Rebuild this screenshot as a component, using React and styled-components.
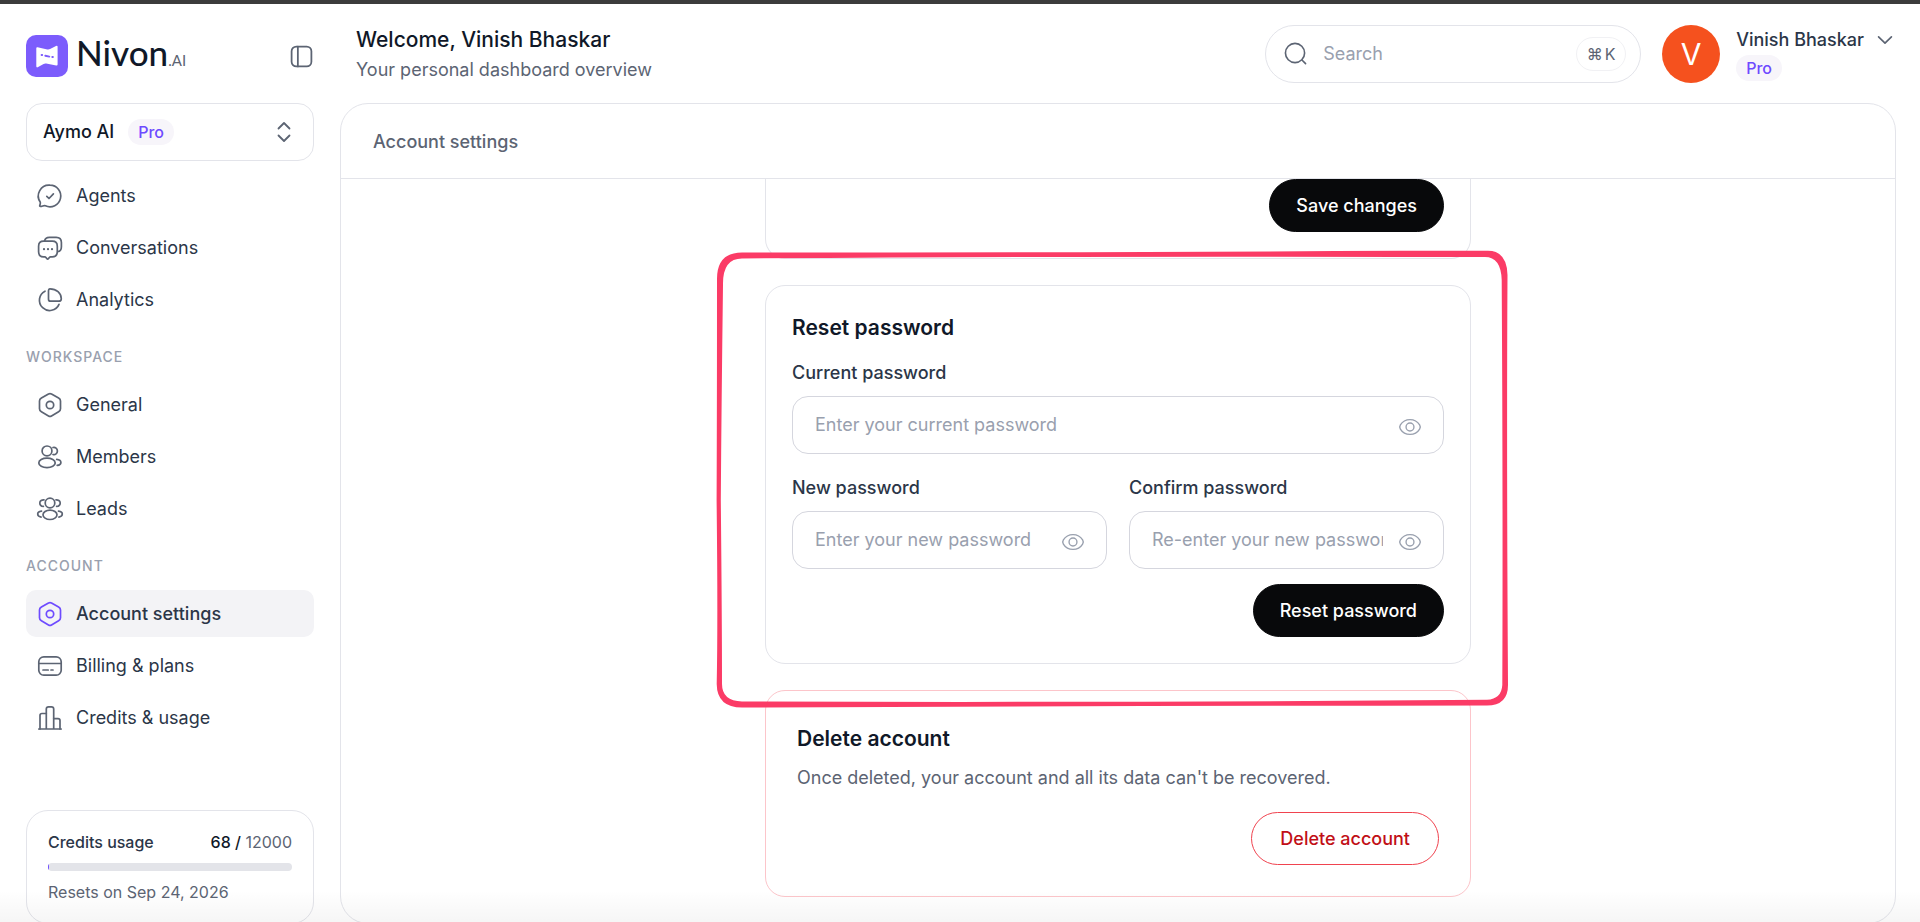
import { useState } from "react";
import styled, { createGlobalStyle, css } from "styled-components";

const GlobalStyle = createGlobalStyle`
  * {
    box-sizing: border-box;
  }

  body {
    margin: 0;
    overflow: hidden;
    background: #fff;
    color: #2b3648;
    font-family: Inter, "Liberation Sans", sans-serif;
    font-size: 18px;
    line-height: 26px;
    -webkit-font-smoothing: antialiased;
  }

  button,
  input {
    font: inherit;
    color: inherit;
  }

  h1,
  h2,
  p {
    margin: 0;
  }
`;

const icons = {
  sidebar: (
    <>
      <rect x="2.5" y="2.5" width="19" height="19" rx="4.5" />
      <path d="M8.5 2.5v19" />
    </>
  ),
  agents: (
    <>
      <path d="M12 1.2a10.8 10.8 0 1 1-4.6 20.6c-1.2-.5-2.1 0-3.3.4-1.2.3-2.6.3-2.4-.5.3-1 .9-2.1.6-3.5A10.8 10.8 0 0 1 12 1.2z" />
      <path d="M8.8 12.3l2.2 2.2 4.4-4.6" />
    </>
  ),
  conversations: (
    <>
      <path d="M6.6 5.2c.3-2.6 1.7-3.9 4.8-3.9h6.8c3.6 0 5.2 1.6 5.2 5.2v4.2c0 3-1.1 4.6-3.7 5" />
      <path d="M5.6 5.2h8.7c3.3 0 5 1.7 5 5v5.6c0 3.3-1.7 5-5 5h-1.8c-.5 0-.8.2-1.1.6l-.9 1.2c-.5.7-1.2.7-1.7 0l-.9-1.2c-.3-.4-.6-.6-1.1-.6H5.6c-3.3 0-5-1.7-5-5v-5.6c0-3.3 1.7-5 5-5z" />
      <path d="M6 13.2h.02M10 13.2h.02M14 13.2h.02" strokeWidth="2.2" />
    </>
  ),
  analytics: (
    <>
      <path d="M12 .9c6.3 0 11.3 4.2 11.3 9.8 0 1.9-.8 2.5-2.5 2.5h-8.300c-1.300 0-2-.7-2-2V3.100c0-1.500.4-2.200 1.500-2.200z" />
      <path d="M7 3.2A10.2 10.2 0 1 0 21 16.3" />
    </>
  ),
  settings: (
    <>
      <path d="M10.5 1.1c.9-.5 2.1-.5 3 0l7.1 4c1.2.7 1.9 1.5 1.9 3v7.6c0 1.5-.7 2.4-1.9 3.1l-7.1 4.1c-.9.5-2.1.5-3 0l-7.1-4.1c-1.2-.7-1.9-1.6-1.9-3.1V8.1c0-1.5.7-2.3 1.9-3z" />
      <circle cx="12" cy="12" r="3.7" />
    </>
  ),
  members: (
    <>
      <circle cx="9" cy="5.9" r="4.9" />
      <ellipse cx="9" cy="17.9" rx="8.2" ry="4.7" />
      <path d="M15 2.5c2.3-.6 4.4 1 4.4 3.5s-2.1 4.2-4.4 3.5" />
      <path d="M18.7 14.4c2.4.3 4.2 1.5 4.2 3s-1.5 2.7-3.7 3" />
    </>
  ),
  leads: (
    <>
      <circle cx="12" cy="6" r="4.8" />
      <ellipse cx="12" cy="17.8" rx="7" ry="4.7" />
      <path d="M18 2.8c2-.2 4.2 1 4.2 3.1s-1.4 3.3-3.6 3.5" />
      <path d="M6 2.8c-2-.2-4.2 1-4.2 3.1s1.4 3.3 3.6 3.5" />
      <path d="M20.5 14.2c2.2.2 3.8 1.3 3.8 2.9s-1.4 2.7-3.4 3" />
      <path d="M3.5 14.2c-2.2.2-3.8 1.3-3.8 2.9s1.4 2.7 3.4 3" />
    </>
  ),
  billing: (
    <>
      <rect x=".8" y="2.8" width="22.4" height="18.4" rx="5" />
      <path d="M.8 9.5h22.4M5 16h5.2M13 16h2" />
    </>
  ),
  credits: (
    <>
      <path d="M.8 23h22.4M8.3 23V3c0-1.4.9-2.2 2.3-2.2h2.8c1.4 0 2.3.8 2.3 2.2v20" />
      <path d="M2 23V9.5c0-1.3.7-2 2-2h4.3M15.7 12.6H20c1.3 0 2 .7 2 2V23" />
    </>
  ),
  sort: <path d="M6.5 8.5L12 3l5.5 5.5M6.5 15.5L12 21l5.5-5.5" />,
  chevron: <path d="M5 8.5l7 7 7-7" />,
  search: (
    <>
      <circle cx="11.5" cy="11.5" r="10" />
      <path d="M19 19l3.5 3.5" />
    </>
  ),
  eye: (
    <>
      <path d="M12 4c5 0 8.6 2.7 10.5 5.8.9 1.4.9 3 0 4.4C20.6 17.3 17 20 12 20s-8.6-2.7-10.5-5.8c-.9-1.4-.9-3 0-4.4C3.4 6.7 7 4 12 4z" />
      <circle cx="12" cy="12" r="4.3" />
    </>
  ),
};

const Icon = ({ name, size = 24, stroke = 1.7 }) => (
  <Svg
    width={size}
    height={size}
    viewBox="0 0 24 24"
    fill="none"
    stroke="currentColor"
    strokeWidth={stroke}
    strokeLinecap="round"
    strokeLinejoin="round"
    aria-hidden="true"
  >
    {icons[name]}
  </Svg>
);

const mainLinks = [
  { icon: "agents", label: "Agents" },
  { icon: "conversations", label: "Conversations" },
  { icon: "analytics", label: "Analytics" },
];

const workspaceLinks = [
  { icon: "settings", label: "General" },
  { icon: "members", label: "Members" },
  { icon: "leads", label: "Leads" },
];

const accountLinks = [
  { icon: "settings", label: "Account settings", active: true },
  { icon: "billing", label: "Billing & plans" },
  { icon: "credits", label: "Credits & usage" },
];

const NavList = ({ links }) => (
  <List>
    {links.map((link) => (
      <li key={link.label}>
        <NavLink href="#" $active={link.active}>
          <Icon name={link.icon} />
          {link.label}
        </NavLink>
      </li>
    ))}
  </List>
);

const PasswordField = ({ id, label, placeholder }) => {
  const [visible, setVisible] = useState(false);

  return (
    <Field>
      <Label htmlFor={id}>{label}</Label>
      <InputBox>
        <Input id={id} type={visible ? "text" : "password"} placeholder={placeholder} />
        <IconButton type="button" aria-label="Show password" onClick={() => setVisible(!visible)}>
          <Icon name="eye" size={22} stroke={1.5} />
        </IconButton>
      </InputBox>
    </Field>
  );
};

const Logo = () => (
  <Brand href="#">
    <svg width="42" height="42" viewBox="0 0 42 42" aria-hidden="true">
      <rect width="42" height="42" rx="10" fill="#7c5cfc" />
      <path
        d="M10.3 13.3q0-1.3 1.3-1l9.7 2.2q1.5.3 2.7-.4l6-3.1q1.6-.7 1.6.8v17.6q0 1.4-1.4 1.1l-10-2q-1.4-.3-2.6.4l-5.5 3.2q-1.8.9-1.8-.8z"
        fill="#fff"
      />
      <path d="M15.6 20h.6M19.3 20.7l4 .9M26.3 22h.6" stroke="#7c5cfc" strokeWidth="1.9" strokeLinecap="round" />
    </svg>
    <BrandName>
      Nivon<BrandSuffix>.AI</BrandSuffix>
    </BrandName>
  </Brand>
);

const App = () => {
  const used = 68;
  const total = 12000;

  return (
    <Page>
      <GlobalStyle />
      <Sidebar>
        <BrandRow>
          <Logo />
          <IconButton type="button" aria-label="Collapse sidebar">
            <Icon name="sidebar" size={25} />
          </IconButton>
        </BrandRow>
        <Workspace type="button">
          Aymo AI
          <Badge>Pro</Badge>
          <Icon name="sort" size={24} stroke={1.8} />
        </Workspace>
        <nav>
          <NavList links={mainLinks} />
          <NavTitle>WORKSPACE</NavTitle>
          <NavList links={workspaceLinks} />
          <NavTitle>ACCOUNT</NavTitle>
          <NavList links={accountLinks} />
        </nav>
        <Usage>
          <UsageRow>
            <UsageLabel>Credits usage</UsageLabel>
            <span>
              <UsageCount>{used} /</UsageCount> {total}
            </span>
          </UsageRow>
          <Track>
            <TrackFill style={{ width: `${(used / total) * 100}%` }} />
          </Track>
          <p>Resets on Sep 24, 2026</p>
        </Usage>
      </Sidebar>

      <Main>
        <TopBar>
          <Greeting>
            <Welcome>Welcome, Vinish Bhaskar</Welcome>
            <Muted>Your personal dashboard overview</Muted>
          </Greeting>
          <SearchBox>
            <Icon name="search" size={23} stroke={1.7} />
            <SearchInput type="search" aria-label="Search" placeholder="Search" />
            <Shortcut>
              <span>⌘</span>
              <span>K</span>
            </Shortcut>
          </SearchBox>
          <Profile type="button">
            <Avatar>V</Avatar>
            <ProfileText>
              <ProfileName>
                Vinish Bhaskar
                <Icon name="chevron" size={22} stroke={1.8} />
              </ProfileName>
              <Badge>Pro</Badge>
            </ProfileText>
          </Profile>
        </TopBar>

        <Panel>
          <PanelHeader>Account settings</PanelHeader>
          <Cards>
            <Card $cut>
              <Actions>
                <Button type="button">Save changes</Button>
              </Actions>
            </Card>

            <Highlighted>
              <Card as="form">
                <CardTitle>Reset password</CardTitle>
                <Fields>
                  <PasswordField id="current" label="Current password" placeholder="Enter your current password" />
                  <FieldRow>
                    <PasswordField id="new" label="New password" placeholder="Enter your new password" />
                    <PasswordField id="confirm" label="Confirm password" placeholder="Re-enter your new password" />
                  </FieldRow>
                </Fields>
                <Actions>
                  <Button type="button">Reset password</Button>
                </Actions>
              </Card>
              <Marker viewBox="716 250 793 458" preserveAspectRatio="none" aria-hidden="true">
                <path
                  fillRule="evenodd"
                  fill="#fb3b66"
                  d="M717 280Q716.5 252.5 742 252.5Q1100 252.5 1400 250.800H1488Q1507 251 1507.5 275Q1506.5 450 1508 685Q1508 705.5 1487 705.5Q1100 706 742 707.5Q717 707.5 716.7 684Q718 620 716.6 500Q717 400 717 280Z
                  M723 285Q722.500 258.500 742 258.500Q1100 256 1400 257H1485Q1501 257 1501.700 280Q1503 500 1502.300 685Q1501.500 699 1487 699.800Q1100 702.800 742 701.500Q722 701 722 684Q722 620 720.800 500Q721.500 400 723 285Z"
                />
              </Marker>
            </Highlighted>

            <Card $danger>
              <CardTitle>Delete account</CardTitle>
              <Warning>Once deleted, your account and all its data can't be recovered.</Warning>
              <Actions>
                <Button type="button" $danger>
                  Delete account
                </Button>
              </Actions>
            </Card>
          </Cards>
        </Panel>
      </Main>
      <BottomShade />
    </Page>
  );
};

const Svg = styled.svg`
  display: block;
  flex: none;
  overflow: visible;
`;

const Page = styled.div`
  position: relative;
  display: flex;
  height: calc(100vh + 2px);
  overflow: hidden;
  border-top: 4px solid #3c3c3c;
`;

const Sidebar = styled.aside`
  display: flex;
  flex-direction: column;
  flex: none;
  width: 340px;
  padding: 31px 26px 0;
`;

const BrandRow = styled.div`
  display: flex;
  align-items: center;
  justify-content: space-between;
  height: 42px;
  margin-bottom: 26px;
`;

const Brand = styled.a`
  display: flex;
  align-items: center;
  gap: 8px;
  color: #101828;
  text-decoration: none;
`;

const BrandName = styled.span`
  font-family: Lato, sans-serif;
  font-size: 35px;
  font-weight: 500;
  line-height: 42px;
`;

const BrandSuffix = styled.span`
  color: #5c6473;
  font-size: 15px;
  font-weight: 400;
`;

const IconButton = styled.button`
  display: flex;
  padding: 0;
  border: 0;
  background: none;
  color: #5c6473;
  cursor: pointer;
`;

const Badge = styled.span`
  padding: 0 10px;
  border-radius: 13px;
  background: #f7f5fa;
  color: #6e4bff;
  font-size: 16px;
  font-weight: 500;
  line-height: 26px;
`;

const Workspace = styled.button`
  display: flex;
  align-items: center;
  gap: 14px;
  height: 58px;
  margin-bottom: 11px;
  padding: 0 17px 0 16px;
  border: 1px solid #e3e4ea;
  border-radius: 16px;
  background: #fff;
  color: #101828;
  font-weight: 500;
  cursor: pointer;

  svg {
    margin-left: auto;
    color: #5c6473;
  }
`;

const List = styled.ul`
  display: flex;
  flex-direction: column;
  gap: 5px;
  margin: 0;
  padding: 0;
  list-style: none;
`;

const NavLink = styled.a`
  display: flex;
  align-items: center;
  gap: 14px;
  height: 47px;
  padding: 0 12px;
  border-radius: 10px;
  color: #2b3648;
  text-decoration: none;

  svg {
    color: #5c6473;
  }

  ${({ $active }) =>
    $active &&
    css`
      background: #f3f3f6;
      font-weight: 500;

      svg {
        color: #6e4bff;
      }
    `}
`;

const NavTitle = styled.h2`
  padding: 24px 0 14px;
  color: #99a0ae;
  font-size: 14px;
  font-weight: 500;
  line-height: 20px;
  letter-spacing: 1px;
`;

const Usage = styled.section`
  margin-top: auto;
  padding: 18px 21px;
  border: 1px solid #e3e4ea;
  border-radius: 22px;
  color: #5c6473;
  font-size: 16px;
`;

const UsageRow = styled.div`
  display: flex;
  justify-content: space-between;
`;

const UsageLabel = styled.span`
  color: #2b3648;
  font-weight: 500;
`;

const UsageCount = styled.span`
  color: #101828;
  font-weight: 500;
`;

const Track = styled.div`
  height: 8px;
  margin: 8px 0;
  overflow: hidden;
  border-radius: 4px;
  background: #e3e4e9;
`;

const TrackFill = styled.div`
  height: 100%;
  background: #6e4bff;
`;

const Main = styled.main`
  display: flex;
  flex: 1;
  flex-direction: column;
  min-width: 0;
  padding-right: 24px;
`;

const TopBar = styled.header`
  display: flex;
  align-items: center;
  flex: none;
  height: 99px;
  padding-left: 16px;
`;

const Greeting = styled.div`
  flex: 1;
`;

const Welcome = styled.h1`
  color: #101828;
  font-size: 21px;
  font-weight: 500;
  line-height: 30px;
`;

const Muted = styled.p`
  margin-top: 2px;
  color: #5c6473;
`;

const SearchBox = styled.div`
  display: flex;
  align-items: center;
  gap: 16px;
  width: 376px;
  height: 58px;
  padding: 0 14px 0 18px;
  border: 1px solid #e3e4ea;
  border-radius: 29px;
  color: #5c6473;
`;

const SearchInput = styled.input`
  flex: 1;
  min-width: 0;
  padding: 0;
  border: 0;
  outline: 0;
  background: none;

  &::placeholder {
    color: #99a0ae;
  }
`;

const Shortcut = styled.kbd`
  display: flex;
  justify-content: center;
  gap: 2px;
  width: 50px;
  border: 1px solid #f1f1f4;
  border-radius: 17px;
  font-family: inherit;
  font-size: 16px;
  line-height: 32px;
`;

const Profile = styled.button`
  display: flex;
  align-items: center;
  gap: 16px;
  margin-left: 21px;
  padding: 0;
  border: 0;
  background: none;
  cursor: pointer;
`;

const Avatar = styled.span`
  width: 58px;
  border-radius: 50%;
  background: #f5511e;
  color: #fff;
  font-size: 30px;
  line-height: 58px;
`;

const ProfileText = styled.span`
  display: flex;
  flex-direction: column;
  align-items: flex-start;
  gap: 2px;
`;

const ProfileName = styled.span`
  display: flex;
  align-items: center;
  gap: 10px;
  font-weight: 500;

  svg {
    color: #5c6473;
  }
`;

const Panel = styled.section`
  display: flex;
  flex: 1;
  flex-direction: column;
  min-height: 0;
  border: 1px solid #e3e4ea;
  border-radius: 28px;
`;

const PanelHeader = styled.div`
  flex: none;
  padding: 25px 32px 23px;
  border-bottom: 1px solid #e3e4ea;
  color: #5c6473;
  font-weight: 500;
`;

const Cards = styled.div`
  display: flex;
  flex-direction: column;
  align-items: center;
  gap: 26px;
`;

const Card = styled.section`
  width: 706px;
  max-width: 100%;
  padding: 26px;
  border: 1px solid ${({ $danger }) => ($danger ? "#fcc5ca" : "#e3e4ea")};
  border-radius: 20px;

  ${({ $danger }) =>
    $danger &&
    css`
      padding: 32px 31px 31px;
    `}

  ${({ $cut }) =>
    $cut &&
    css`
      padding-top: 0;
      border-top: 0;
      border-radius: 0 0 20px 20px;
    `}
`;

const CardTitle = styled.h2`
  color: #101828;
  font-size: 21px;
  font-weight: 600;
  line-height: 32px;
`;

const Fields = styled.div`
  display: flex;
  flex-direction: column;
  gap: 21px;
  margin: 16px 0 15px;
`;

const FieldRow = styled.div`
  display: grid;
  grid-template-columns: repeat(2, minmax(0, 1fr));
  gap: 22px;
`;

const Field = styled.div`
  display: flex;
  flex-direction: column;
  gap: 10px;
  min-width: 0;
`;

const Label = styled.label`
  font-weight: 500;
`;

const InputBox = styled.div`
  display: flex;
  align-items: center;
  gap: 16px;
  height: 58px;
  padding: 0 22px;
  border: 1px solid #d5d6de;
  border-radius: 16px;

  button {
    padding-top: 4px;
    color: #99a0ae;
  }
`;

const Input = styled.input`
  flex: 1;
  min-width: 0;
  padding: 0;
  border: 0;
  outline: 0;
  background: none;

  &::placeholder {
    color: #99a0ae;
  }
`;

const Actions = styled.div`
  display: flex;
  justify-content: flex-end;
`;

const Button = styled.button`
  height: 53px;
  padding: 0 ${({ $danger }) => ($danger ? "28px" : "26px")};
  border: 1px solid ${({ $danger }) => ($danger ? "#f0434f" : "#08090b")};
  border-radius: 27px;
  background: ${({ $danger }) => ($danger ? "#fff" : "#08090b")};
  color: ${({ $danger }) => ($danger ? "#c10f16" : "#fff")};
  font-weight: 500;
  cursor: pointer;
`;

const Warning = styled.p`
  margin: 10px 0 21px;
  color: #5c6473;
`;

const Highlighted = styled.div`
  position: relative;
  width: 706px;
  max-width: 100%;
`;

/* hand-drawn frame around the password card */
const Marker = styled.svg`
  position: absolute;
  top: -35px;
  left: -49px;
  width: 793px;
  height: 458px;
  z-index: 1;
  overflow: visible;
  pointer-events: none;
`;

const BottomShade = styled.div`
  position: absolute;
  right: 0;
  bottom: 0;
  left: 0;
  height: 34px;
  background: linear-gradient(rgba(0, 0, 0, 0), rgba(0, 0, 0, 0.04));
  pointer-events: none;
`;

export default App;
